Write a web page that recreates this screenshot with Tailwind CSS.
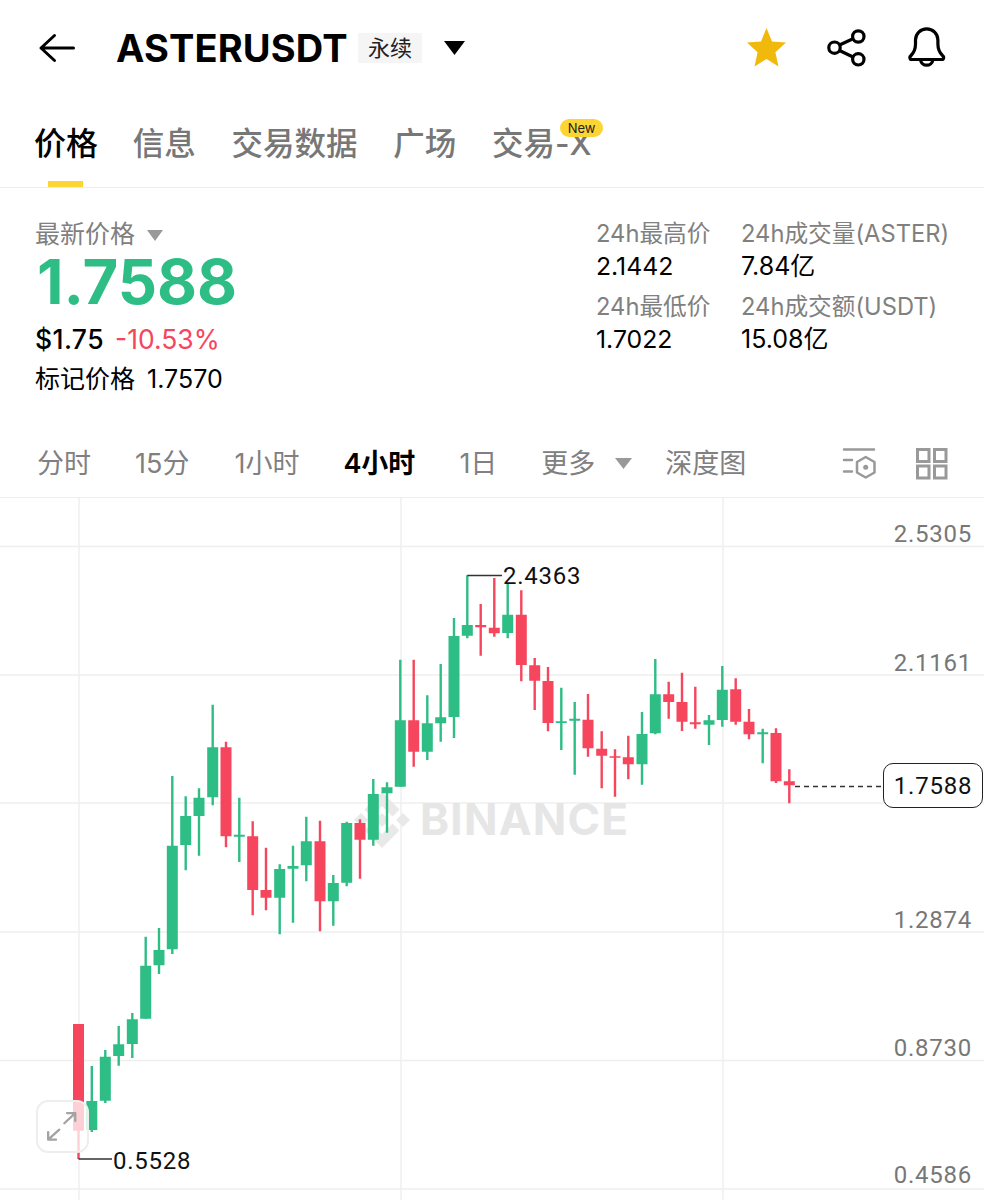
<!DOCTYPE html>
<html lang="zh">
<head>
<meta charset="utf-8">
<script src="https://cdn.jsdelivr.net/npm/@tailwindcss/browser@4"></script>
<title>ASTERUSDT</title>
</head>
<body class="bg-white">
<div class="w-[984px] h-[1200px] overflow-hidden bg-white text-black font-['Inter','Noto_Sans_CJK_SC',sans-serif]">

  <header class="h-[96px] flex items-center relative">
    <svg class="ml-[38px] w-[38px] h-[30px]" viewBox="38 33 38 30" fill="none" stroke="#000" stroke-width="3" stroke-linecap="round" stroke-linejoin="round"><path d="M73.5 48H41M54.5 35.5L41 48L54.5 60.5"/></svg>
    <h1 class="ml-[40px] w-[230px] text-[38px] leading-none font-bold tracking-[0.15px] whitespace-nowrap">ASTERUSDT</h1>
    <span class="ml-[12px] w-[64px] h-[30px] flex items-center justify-center bg-[#f5f5f5] text-[22px] text-[#222]">永续</span>
    <svg class="ml-[22px] w-[21px] h-[14px]" viewBox="0 0 21 14"><path d="M0 0H21L10.5 14Z" fill="#000"/></svg>
    <svg class="ml-auto w-[42px] h-[42px]" viewBox="745 28 42 42"><path d="M766.500 29L772 42.400L786 43.600L775.400 53.200L778.500 67.500L766.500 60L754.500 67.500L757.600 53.200L747 43.600L761 42.400Z" fill="#F0B90B"/></svg>
    <svg class="ml-[39px] w-[42px] h-[42px]" viewBox="826 27 42 42" fill="none" stroke="#000" stroke-width="3.200"><circle cx="834.500" cy="47.700" r="5.700"/><circle cx="858.300" cy="36.500" r="5.700"/><circle cx="858.300" cy="59.300" r="5.700"/><path d="M839.500 45L853 38.800M839.500 50.500L853 57"/></svg>
    <svg class="ml-[38px] w-[42px] h-[44px] mr-[36px]" viewBox="906 26 42 44" fill="none" stroke="#000" stroke-width="3.200" stroke-linejoin="round"><path d="M910.500 59.500Q909 57 911 55.500Q915.500 51 915.500 44V40A11.200 11.200 0 0 1 937.900 40V44Q937.900 51 942.500 55.500Q944.500 57 943 59.500Z"/><path d="M920.500 60A6.300 6.300 0 0 0 932.900 60"/></svg>
  </header>

  <nav class="h-[92px] border-b border-[#eeeeee] flex pl-[34px] gap-[35.750px] text-[31.500px] leading-[44px] pt-[26px] text-[#777777] font-medium">
    <div class="relative text-black w-[63px] text-[32px] whitespace-nowrap">价格<span class="absolute left-[14px] top-[59px] w-[35px] h-[6px] bg-[#FCD535]"></span></div>
    <div>信息</div>
    <div>交易数据</div>
    <div>广场</div>
    <div class="relative">交易-X<span class="absolute left-[68px] top-[-3px] w-[43px] h-[18px] rounded-full bg-[#FCD535] text-[13px] leading-[18px] text-center text-[#222] font-normal">New</span></div>
  </nav>

  <section class="h-[242px] flex pt-[30px] pl-[35px]">
    <div class="w-[561px]">
      <div class="flex items-center h-[34px] text-[25px] text-[#808080]">最新价格<svg class="ml-[12px] w-[16px] h-[11px]" viewBox="0 0 16 11"><path d="M0 0H16L8 11Z" fill="#999999"/></svg></div>
      <div class="h-[60px] pl-[2px] text-[61.500px] leading-[60px] font-bold text-[#2EBD85]">1.7588</div>
      <div class="mt-[11px] h-[34px] flex items-center text-[26.500px]"><span class="font-medium tracking-[0.400px]">$1.75</span><span class="ml-[11px] text-[#F6465D]">-10.53%</span></div>
      <div class="mt-[6px] h-[34px] flex items-center text-[25px]">标记价格<span class="ml-[12px]">1.7570</span></div>
    </div>
    <div class="flex text-[23.700px] leading-[32px]">
      <div class="w-[145px]">
        <div class="text-[#808080]">24h最高价</div>
        <div class="text-[24.800px]">2.1442</div>
        <div class="mt-[9px] text-[#808080]">24h最低价</div>
        <div class="text-[24.800px]">1.7022</div>
      </div>
      <div>
        <div class="text-[#808080]">24h成交量(ASTER)</div>
        <div class="text-[25px]">7.84亿</div>
        <div class="mt-[9px] text-[#808080]">24h成交额(USDT)</div>
        <div class="text-[25px]">15.08亿</div>
      </div>
    </div>
  </section>

  <div class="h-[68px] border-b border-[#eeeeee] flex items-center pl-[37px] pt-[2px] text-[27px] text-[#808080]">
    <span>分时</span>
    <span class="ml-[44px]">15分</span>
    <span class="ml-[45px]">1小时</span>
    <span class="ml-[44px] font-semibold text-black">4小时</span>
    <span class="ml-[44px]">1日</span>
    <span class="ml-[44px]">更多</span>
    <svg class="ml-[20px] w-[17px] h-[11px] -translate-y-[1px]" viewBox="0 0 17 11"><path d="M0 0H17L8.500 11Z" fill="#999999"/></svg>
    <span class="ml-[33px]">深度图</span>
    <svg class="ml-auto w-[36px] h-[34px] -translate-y-[1px]" viewBox="843 448 36 34" fill="none" stroke="#999999" stroke-width="2.500" stroke-linecap="round"><path d="M845 450.500H875M845 461H853M845 472.500H853"/><path d="M866.700 458L875.500 463V473.500L866.700 478.500L858 473.500V463Z" stroke-linejoin="round"/><circle cx="866.700" cy="468.300" r="2.500" fill="#999999" stroke="none"/></svg>
    <svg class="ml-[38px] mr-[36px] w-[32px] h-[32px] -translate-y-[1px]" viewBox="916 448 32 32" fill="none" stroke="#999999" stroke-width="3"><rect x="917.500" y="449.500" width="11.500" height="12"/><rect x="934.500" y="449.500" width="11.500" height="12"/><rect x="917.500" y="466" width="11.500" height="12"/><rect x="934.500" y="466" width="11.500" height="12"/></svg>
  </div>

  <div class="relative h-[702px]">
    <svg class="absolute inset-0 w-[984px] h-[702px]" viewBox="0 498 984 702">
      <path d="M0 546.500H984M0 675H984M0 803H984M0 932H984M0 1060.500H984M0 1189H984M79 498V1200M401 498V1200M723 498V1200" stroke="#efefef" stroke-width="1.500" fill="none"/>
      <g fill="#e9e9e9" transform="translate(354 792) scale(1.750)">
        <path d="M16 0L26 10L22 14L16 8L10 14L6 10Z"/>
        <path d="M16 32L26 22L22 18L16 24L10 18L6 22Z"/>
        <path d="M0 16L4 12L8 16L4 20Z"/>
        <path d="M24 16L28 12L32 16L28 20Z"/>
        <path d="M16 12L20 16L16 20L12 16Z"/>
      </g>
      <text x="420" y="835" font-size="44" font-weight="700" fill="#e6e6e6" font-family="Inter, sans-serif" textLength="208">BINANCE</text>

      <path fill="none" stroke="#2EBD85" stroke-width="2.400" d="M91.800 1066V1132M105.300 1050V1103M118.700 1026V1065.700M132.300 1013V1058M145.700 936.700V1018.700M159 928V974M172.300 776V954M185.700 796.300V870.300M199 788.300V855.700M212.700 704.700V805.300M239.300 797.700V862M279.700 864.300V934.300M293 845.700V922.700M306.300 816.700V881.300M333.300 875V925.700M346.700 821.700V886.300M373.300 779V845.700M387 782.300V832.700M400.300 659.700V786.700M427.300 695.300V760M440.700 664V741.700M454 618V738M467.300 575.300V638.300M507.700 583.300V638.300M561.300 687.700V750M574.700 702V774.700M642 712V784.700M655.300 659V734.300M709 715V745M722.300 666V726.700M762.700 728.700V763.300"/>
      <path fill="none" stroke="#2EBD85" stroke-width="11" d="M91.800 1101V1130M105.300 1056.700V1100.700M118.700 1044.300V1056M132.300 1019.300V1044M145.700 965.700V1018.700M159 950V965.300M172.300 845.700V949.300M185.700 816V845M199 797.700V816M212.700 747.300V797.300M239.300 834.700V836.700M279.700 869V897.700M293 866V868.700M306.300 841.300V865.300M333.300 883V901.300M346.700 823V882.700M373.300 794V839.700M387 787.300V793.300M400.300 720.300V786.700M427.300 723.300V751.700M440.700 717.300V723.300M454 636V717M467.300 625V635.700M507.700 614.700V633M561.300 721.300V723M574.700 718.700V720.700M642 734V764.300M655.300 694.300V733.300M709 720.300V724.700M722.300 689.700V720M762.700 732.300V734.300"/>
      <path fill="none" stroke="#F6465D" stroke-width="2.400" d="M78.500 1024V1159M226 741.700V847.300M252.700 821.300V915.300M266 847.700V910.300M320 820.700V931.300M360 819.300V878.700M413.700 659.700V766.700M480.700 604V655.700M494.300 578V636.700M521.300 590.300V681.300M534.700 658V710M548 667V731.300M588 694V756.700M601.700 731.300V788.300M615 749.300V796.700M628.300 735.700V779.300M668.700 681.700V718.700M682 672.700V731M695.300 686.700V728.700M735.700 678.300V724.700M749 709V739.300M776 728.300V783M789.300 769.300V803.300"/>
      <path fill="none" stroke="#F6465D" stroke-width="11" d="M78.500 1024V1130.700M226 747.300V836.300M252.700 836.300V890M266 890V897.700M320 841.300V901.300M360 823V839.700M413.700 720.300V751.700M480.700 625V627.300M494.300 627.700V633.300M521.300 614.700V665M534.700 665.300V680.700M548 681V723M588 719.700V748.300M601.700 748.700V755.700M615 756.300V757.700M628.300 757.300V764.300M668.700 694.300V702M682 702V721.700M695.300 722.300V724.300M735.700 689.300V721.700M749 721.700V734.300M776 733V781.300M789.300 781.300V785.300"/>

      <path fill="none" stroke="#333333" stroke-width="1.500" d="M467.300 575.500H502M78.500 1159H112"/>
      <path fill="none" stroke="#333333" stroke-width="1.500" stroke-dasharray="5 4" d="M795 786.500H882"/>

      <g font-family="Roboto, sans-serif" font-size="24" letter-spacing="0.750">
        <g fill="#777777" text-anchor="end">
          <text x="972" y="542">2.5305</text>
          <text x="972" y="671">2.1161</text>
          <text x="972" y="928">1.2874</text>
          <text x="972" y="1056">0.8730</text>
          <text x="972" y="1183">0.4586</text>
        </g>
        <g fill="#111111">
          <text x="503" y="584">2.4363</text>
          <text x="113" y="1169">0.5528</text>
        </g>
      </g>
    </svg>
    <div class="absolute left-[883px] top-[265px] w-[100px] h-[45px] rounded-[10px] border-[1.500px] border-[#222222] bg-white flex items-center justify-center text-[24px] tracking-[0.750px] text-[#111111] font-['Roboto',sans-serif]">1.7588</div>
    <div class="absolute left-[36px] top-[602px] w-[53px] h-[53px] rounded-[12px] border-2 border-[#eeeeee] bg-white/75">
      <svg class="w-full h-full" viewBox="37 1100 53 53" fill="none" stroke="#a3a3a3" stroke-width="2.500" stroke-linecap="round" stroke-linejoin="round"><path d="M48 1140.700L60 1130M48 1132.500V1140.700H56.500M65.500 1123L77.300 1112M68.500 1112H77.300V1120.500"/></svg>
    </div>
  </div>
</div>
</body>
</html>
